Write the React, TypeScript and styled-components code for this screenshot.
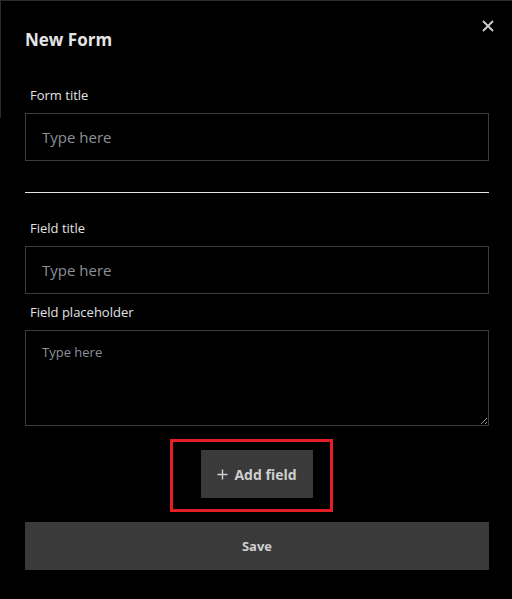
import React from 'react';
import styled, { createGlobalStyle } from 'styled-components';

const GlobalStyle = createGlobalStyle`
  html, body {
    margin: 0;
    padding: 0;
    background: #000;
  }
  body {
    font-family: 'Segoe UI', 'Open Sans', 'Noto Sans', sans-serif;
    color: #e6e6e6;
  }
  * {
    box-sizing: border-box;
  }
`;

const Panel = styled.div`
  position: relative;
  width: 512px;
  min-height: 599px;
  border-top: 1px solid #2b2b2b;
  padding: 0 23px 0 25px;
  display: flex;
  flex-direction: column;

  &::before {
    content: '';
    position: absolute;
    left: 0;
    top: 0;
    width: 1px;
    height: 117px;
    background: #2b2b2b;
  }
`;

const Header = styled.div`
  display: flex;
  justify-content: space-between;
  align-items: flex-start;
  padding-top: 27px;
  margin-bottom: 34px;
`;

const Title = styled.h2`
  margin: 0;
  font-size: 17px;
  line-height: 24px;
  font-weight: 700;
  color: #e4e4e4;
`;

const CloseButton = styled.button`
  margin: -8px -5px 0 0;
  width: 12px;
  height: 12px;
  padding: 0;
  border: none;
  background: transparent;
  display: flex;
  cursor: pointer;
  color: #d0d0d0;
`;

const Label = styled.label`
  display: block;
  margin: 0 0 9px 5px;
  font-size: 13px;
  line-height: 18px;
  color: #e2e2e2;
`;

const Input = styled.input`
  display: block;
  width: 100%;
  height: 48px;
  margin-bottom: 9px;
  padding: 0 16px;
  border: 1px solid #3c3c3c;
  background: #000;
  color: #e6e6e6;
  font-family: inherit;
  font-size: 15px;
  outline: none;

  &::placeholder {
    color: #8c9099;
  }
`;

const TextArea = styled.textarea`
  display: block;
  width: 100%;
  height: 96px;
  padding: 12px 16px;
  border: 1px solid #3c3c3c;
  background: #000;
  color: #e6e6e6;
  font-family: inherit;
  font-size: 13px;
  resize: vertical;
  outline: none;

  &::placeholder {
    color: #8c9099;
  }
`;

const Divider = styled.hr`
  margin: 22px 0 26px;
  border: none;
  border-top: 1px solid #e6e6e6;
`;

const AddRow = styled.div`
  display: flex;
  justify-content: center;
  margin: 13px 0 10px;
`;

const Highlight = styled.div`
  border: 3px solid #e31e24;
  padding: 8px 17px 11px 28px;
  margin-right: 11px;
`;

const Button = styled.button<{ $wide?: boolean }>`
  display: flex;
  align-items: center;
  justify-content: center;
  gap: 6px;
  width: ${(p) => (p.$wide ? '100%' : '112px')};
  height: 48px;
  border: none;
  background: #3a3a3a;
  color: #cfcfcf;
  font-family: inherit;
  font-size: ${(p) => (p.$wide ? '13px' : '14px')};
  font-weight: 700;
  cursor: pointer;
`;

const Plus = () => (
  <svg width="11" height="11" viewBox="0 0 11 11" fill="none" stroke="currentColor" strokeWidth="1.4">
    <path d="M5.5 0.5v10M0.5 5.5h10" />
  </svg>
);

const CloseIcon = () => (
  <svg width="12" height="12" viewBox="0 0 12 12" fill="none" stroke="currentColor" strokeWidth="1.8">
    <path d="M1 1l10 10M11 1L1 11" />
  </svg>
);

const App: React.FC = () => {
  return (
    <>
      <GlobalStyle />
      <Panel>
        <Header>
          <Title>New Form</Title>
          <CloseButton aria-label="Close">
            <CloseIcon />
          </CloseButton>
        </Header>

        <Label>Form title</Label>
        <Input placeholder="Type here" />

        <Divider />

        <Label>Field title</Label>
        <Input placeholder="Type here" />

        <Label>Field placeholder</Label>
        <TextArea placeholder="Type here" />

        <AddRow>
          <Highlight>
            <Button>
              <Plus />
              Add field
            </Button>
          </Highlight>
        </AddRow>

        <Button $wide>Save</Button>
      </Panel>
    </>
  );
};

export default App;
